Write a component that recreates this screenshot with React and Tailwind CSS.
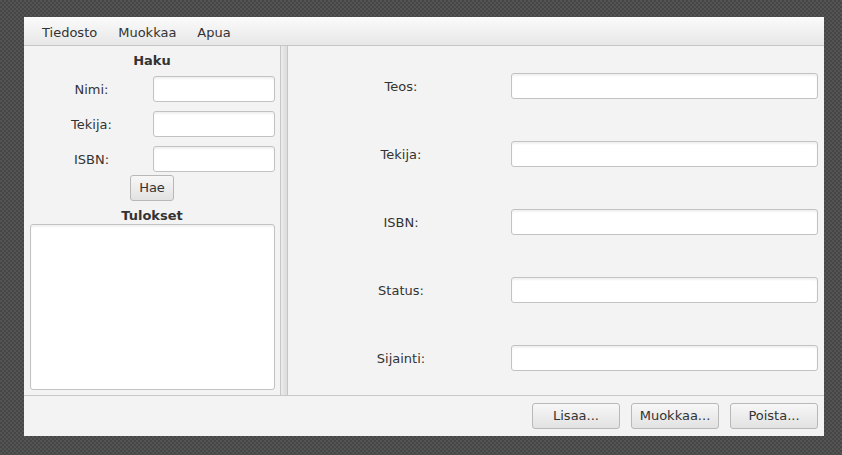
import React from 'react';

const font = { fontFamily: '"DejaVu Sans", "Liberation Sans", sans-serif' };

const Field = ({ className = '' }) => (
  <div
    className={`h-[26px] rounded-[3px] border border-[#c2c2c2] bg-white shadow-[inset_0_2px_2px_rgba(0,0,0,0.06)] ${className}`}
  />
);

const Button = ({ children, className = '' }) => (
  <div
    className={`h-[26px] flex items-center justify-center rounded-[3px] border border-[#b8b8b8] bg-gradient-to-b from-[#f7f7f7] to-[#e2e2e2] text-[13px] text-[#333] ${className}`}
  >
    {children}
  </div>
);

const searchRows = ['Nimi:', 'Tekija:', 'ISBN:'];
const detailRows = ['Teos:', 'Tekija:', 'ISBN:', 'Status:', 'Sijainti:'];

export default function App() {
  return (
    <div
      className="w-[842px] h-[455px] pt-[17px] pl-[24px] bg-[repeating-conic-gradient(#464646_0_25%,#545454_0_50%)] bg-[length:4px_4px]"
      style={font}
    >
      <div className="w-[800px] h-[419px] flex flex-col bg-[#f3f3f3] text-[#333]">
        {/* menu */}
        <div className="h-[29px] flex items-center gap-[21px] pl-[18px] pt-[3px] text-[13px] border-b border-[#c6c6c6] bg-gradient-to-b from-[#fbfbfb] to-[#e7e7e7]">
          <span>Tiedosto</span>
          <span>Muokkaa</span>
          <span>Apua</span>
        </div>

        <div className="flex h-[350px] border-b border-[#c8c8c8]">
          {/* search panel */}
          <div className="w-[256px] flex flex-col items-center pt-[7px]">
            <div className="font-bold text-[13px] leading-[16px]">Haku</div>
            <div className="mt-[7px] flex flex-col gap-[9px] w-full">
              {searchRows.map((l) => (
                <div key={l} className="flex items-center">
                  <div className="w-[123px] ml-[6px] pt-[1px] text-center text-[13px]">{l}</div>
                  <Field className="w-[122px]" />
                </div>
              ))}
            </div>
            <Button className="mt-[3px] w-[44px]">Hae</Button>
            <div className="mt-[7px] font-bold text-[13px] leading-[16px]">Tulokset</div>
            <div className="w-[245px] h-[166px] rounded-[3px] border border-[#c2c2c2] bg-white shadow-[inset_0_2px_2px_rgba(0,0,0,0.06)]" />
          </div>

          {/* divider */}
          <div className="w-[8px] border-x border-[#c6c6c6] bg-gradient-to-r from-[#ececec] to-[#dcdcdc]" />

          {/* detail panel */}
          <div className="flex-1 flex flex-col pt-[27px] gap-[42px]">
            {detailRows.map((l) => (
              <div key={l} className="flex items-center">
                <div className="w-[223px] pl-[3px] pt-[2px] text-center text-[13px]">{l}</div>
                <Field className="w-[307px]" />
              </div>
            ))}
          </div>
        </div>

        {/* bottom bar */}
        <div className="flex-1 flex items-center justify-end gap-[11px] pr-[6px]">
          <Button className="w-[88px]">Lisaa...</Button>
          <Button className="w-[88px]">Muokkaa...</Button>
          <Button className="w-[88px]">Poista...</Button>
        </div>
      </div>
    </div>
  );
}
